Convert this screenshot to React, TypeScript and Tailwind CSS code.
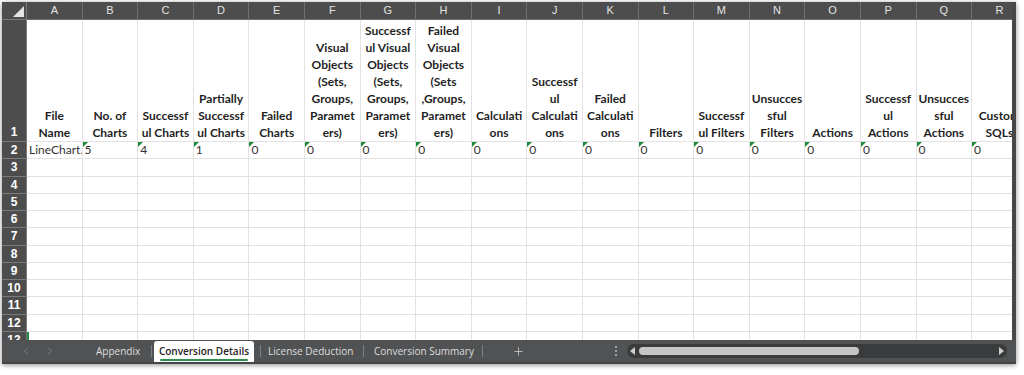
import React from "react";
import { ChevronLeft, ChevronRight, Plus } from "lucide-react";

const COLS = "ABCDEFGHIJKLMNOPQR".split("");

const HEAD: string[][] = [
  ["File", "Name"],
  ["No. of", "Charts"],
  ["Successf", "ul Charts"],
  ["Partially", "Successf", "ul Charts"],
  ["Failed", "Charts"],
  ["Visual", "Objects", "(Sets,", "Groups,", "Paramet", "ers)"],
  ["Successf", "ul Visual", "Objects", "(Sets,", "Groups,", "Paramet", "ers)"],
  ["Failed", "Visual", "Objects", "(Sets", ",Groups,", "Paramet", "ers)"],
  ["Calculati", "ons"],
  ["Successf", "ul", "Calculati", "ons"],
  ["Failed", "Calculati", "ons"],
  ["Filters"],
  ["Successf", "ul Filters"],
  ["Unsucces", "sful", "Filters"],
  ["Actions"],
  ["Successf", "ul", "Actions"],
  ["Unsucces", "sful", "Actions"],
  ["Custom", "SQLs"],
];

const DATA = [
  "LineChart.",
  "5",
  "4",
  "1",
  "0",
  "0",
  "0",
  "0",
  "0",
  "0",
  "0",
  "0",
  "0",
  "0",
  "0",
  "0",
  "0",
  "0",
];

const EMPTY_ROWS = [3, 4, 5, 6, 7, 8, 9, 10, 11, 12, 13];

function RowHead({ n, bottom }: { n: number; bottom?: boolean }) {
  return (
    <div
      className={`bg-[#4d4d4d] border-r border-b border-[#7a7a7a] text-white font-bold text-[12px] leading-[14px] flex justify-center ${
        bottom ? "items-end pb-[2px]" : "items-center"
      } font-['Liberation_Sans',Arial,sans-serif]`}
    >
      {n}
    </div>
  );
}

function TabSep() {
  return <div className="w-px h-[12px] bg-[#7c7e80]" />;
}

function TabBar() {
  return (
    <div className="h-[24px] w-full flex flex-col">
      <div className="h-[22px] w-full bg-[#505254] flex items-center font-['Open_Sans',sans-serif] text-[10px]">
        <div className="w-[18px]" />
        <ChevronLeft size={12} strokeWidth={1.5} className="text-[#8f9193]" />
        <div className="w-[12px]" />
        <ChevronRight size={12} strokeWidth={1.5} className="text-[#8f9193]" />
        <div className="w-[40px]" />
        <div className="text-[#dedede] w-[44px] whitespace-nowrap">Appendix</div>
        <div className="w-[11px]" />
        <TabSep />
        <div className="w-[2px]" />
        <div className="self-end h-[21px] w-[100px] bg-white rounded-t-[3px] flex flex-col items-center justify-center">
          <div className="text-[#222] font-semibold whitespace-nowrap leading-[14px] mt-[1px]">Conversion Details</div>
          <div className="w-[88px] h-[2px] bg-[#2f8f4e] rounded-full mt-[1px]" />
        </div>
        <div className="w-[6px]" />
        <TabSep />
        <div className="w-[7px]" />
        <div className="text-[#dedede] whitespace-nowrap w-[88px]">License Deduction</div>
        <div className="w-[7px]" />
        <TabSep />
        <div className="w-[10px]" />
        <div className="text-[#dedede] whitespace-nowrap w-[100px]">Conversion Summary</div>
        <div className="w-[8px]" />
        <TabSep />
        <div className="w-[29px]" />
        <Plus size={13} strokeWidth={1.3} className="text-[#d8d8d8]" />
        <div className="w-[90px]" />
        <div className="flex flex-col gap-[2px]">
          <div className="w-[2px] h-[2px] bg-[#bdbdbd] rounded-full" />
          <div className="w-[2px] h-[2px] bg-[#bdbdbd] rounded-full" />
          <div className="w-[2px] h-[2px] bg-[#bdbdbd] rounded-full" />
        </div>
        <div className="w-[10px]" />
        <div className="w-[380px] h-[14px] rounded-full bg-[#3a3b3c] flex items-center">
          <div className="w-[3px]" />
          <svg width="5" height="8" viewBox="0 0 5 8">
            <path d="M5 0 L0 4 L5 8 Z" fill="#d0d0d0" />
          </svg>
          <div className="w-[4px]" />
          <div className="w-[220px] h-[8px] rounded-full bg-[#c6c6c6]" />
          <div className="flex-1" />
          <svg width="5" height="8" viewBox="0 0 5 8">
            <path d="M0 0 L5 4 L0 8 Z" fill="#d0d0d0" />
          </svg>
          <div className="w-[3px]" />
        </div>
      </div>
      <div className="h-[2px] w-full bg-[#434547]" />
    </div>
  );
}

export default function App() {
  return (
    <div className="w-[1024px] h-[375px] bg-white overflow-hidden">
      <div className="ml-[2px] mt-[2px] w-[1014px] h-[362px] bg-[#474747] flex flex-col shadow-[0_1px_5px_rgba(0,0,0,0.45)]">
        <div className="h-[338px] w-[1010px] overflow-hidden bg-white">
          <div className="grid grid-cols-[25px_repeat(18,55.6px)] grid-rows-[18px_122px_repeat(12,17.25px)] w-max">
            {/* corner */}
            <div className="bg-[#4d4d4d] border-r border-b border-[#7a7a7a] flex items-end justify-end p-[2px]">
              <svg width="11" height="11" viewBox="0 0 11 11">
                <path d="M11 0 L11 11 L0 11 Z" fill="#e4e4e4" />
              </svg>
            </div>
            {COLS.map((c) => (
              <div
                key={c}
                className="bg-[#4d4d4d] border-r border-b border-[#6e6e6e] text-[#e4e4e4] text-[11px] flex items-center justify-center font-['Liberation_Sans',Arial,sans-serif]"
              >
                {c}
              </div>
            ))}

            {/* row 1 */}
            <RowHead n={1} bottom />
            {HEAD.map((lines, i) => (
              <div
                key={i}
                className="border-r border-b border-[#e2e2e2] flex flex-col justify-end items-center overflow-hidden font-['Lato',sans-serif] font-bold text-[12px] leading-[17px] text-[#1f1f1f]"
              >
                {lines.map((l, j) => (
                  <div key={j} className="whitespace-nowrap">
                    {l}
                  </div>
                ))}
              </div>
            ))}

            {/* row 2 */}
            <RowHead n={2} />
            {DATA.map((d, i) => (
              <div
                key={i}
                className="relative border-r border-b border-[#e2e2e2] flex items-center overflow-hidden pl-[2px] font-['Lato',sans-serif] text-[12px] text-[#333333] whitespace-nowrap"
              >
                {i > 0 && (
                  <div className="absolute top-0 left-0 w-0 h-0 border-t-[5px] border-r-[5px] border-t-[#1e8a3c] border-r-transparent" />
                )}
                {d}
              </div>
            ))}

            {EMPTY_ROWS.map((r) => (
              <React.Fragment key={r}>
                <RowHead n={r} />
                {COLS.map((c, i) => (
                  <div
                    key={c}
                    className={`border-r border-b border-[#e2e2e2] ${
                      r === 13 && i === 0 ? "border-l-2 border-l-[#1e8a3c]" : ""
                    }`}
                  />
                ))}
              </React.Fragment>
            ))}
          </div>
        </div>
        <TabBar />
      </div>
    </div>
  );
}
